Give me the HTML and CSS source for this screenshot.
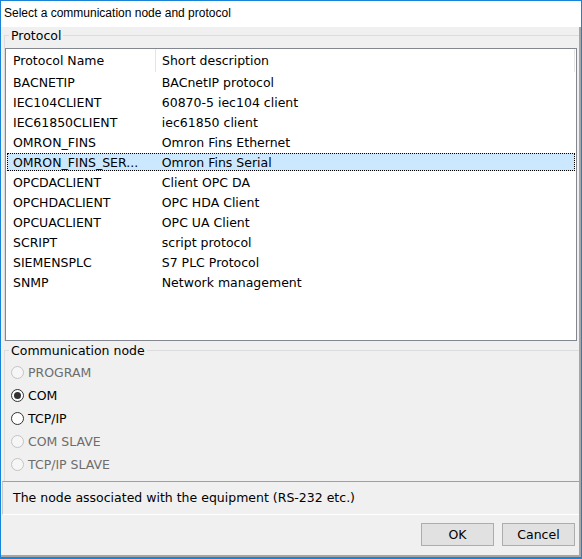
FILE: index.html
```html
<!DOCTYPE html>
<html>
<head>
<meta charset="utf-8">
<link rel="stylesheet" href="styles.css">
</head>
<body>
<div class="window">
  <div class="titlebar">Select a communication node and protocol</div>
  <div class="main">
    <fieldset class="group protocol">
      <legend>Protocol</legend>
      <div class="listview">
        <div class="lv-header">
          <div class="col c1 hcell">Protocol Name</div>
          <div class="col c2 hcell">Short description</div>
        </div>
        <div class="lv-rows">
          <div class="row"><div class="col c1">BACNETIP</div><div class="col c2">BACnetIP protocol</div></div>
          <div class="row"><div class="col c1">IEC104CLIENT</div><div class="col c2">60870-5 iec104 client</div></div>
          <div class="row"><div class="col c1">IEC61850CLIENT</div><div class="col c2">iec61850 client</div></div>
          <div class="row"><div class="col c1">OMRON_FINS</div><div class="col c2">Omron Fins Ethernet</div></div>
          <div class="row selected"><div class="col c1">OMRON_FINS_SER...</div><div class="col c2">Omron Fins Serial</div></div>
          <div class="row"><div class="col c1">OPCDACLIENT</div><div class="col c2">Client OPC DA</div></div>
          <div class="row"><div class="col c1">OPCHDACLIENT</div><div class="col c2">OPC HDA Client</div></div>
          <div class="row"><div class="col c1">OPCUACLIENT</div><div class="col c2">OPC UA Client</div></div>
          <div class="row"><div class="col c1">SCRIPT</div><div class="col c2">script protocol</div></div>
          <div class="row"><div class="col c1">SIEMENSPLC</div><div class="col c2">S7 PLC Protocol</div></div>
          <div class="row"><div class="col c1">SNMP</div><div class="col c2">Network management</div></div>
        </div>
      </div>
    </fieldset>
    <fieldset class="group comm">
      <legend>Communication node</legend>
      <div class="radios">
        <div class="radio disabled"><span class="circle"></span><span class="label">PROGRAM</span></div>
        <div class="radio checked"><span class="circle"></span><span class="label">COM</span></div>
        <div class="radio"><span class="circle"></span><span class="label">TCP/IP</span></div>
        <div class="radio disabled"><span class="circle"></span><span class="label">COM SLAVE</span></div>
        <div class="radio disabled"><span class="circle"></span><span class="label">TCP/IP SLAVE</span></div>
      </div>
    </fieldset>
    <div class="desc">The node associated with the equipment (RS-232 etc.)</div>
    <div class="buttons">
      <div class="btn">OK</div>
      <div class="btn">Cancel</div>
    </div>
  </div>
</div>
</body>
</html>
```
FILE: styles.css
```css
html, body {
  margin: 0;
  padding: 0;
  background: #f0f0f0;
}
.window {
  box-sizing: border-box;
  width: 582px;
  height: 559px;
  border: 1px solid #1883d7;
  border-bottom-width: 2px;
  display: flex;
  flex-direction: column;
  font-family: "DejaVu Sans", sans-serif;
  font-size: 12.5px;
  color: #000;
}
.titlebar {
  height: 26px;
  line-height: 24px;
  background: #fff;
  padding-left: 3px;
  font-family: "Liberation Sans", Arial, sans-serif;
  font-size: 12px;
  flex: none;
}
.main {
  flex: 1;
  background: #f0f0f0;
  border-right: 2px solid #a6a6a6;
  border-bottom: 2px solid #a6a6a6;
  display: flex;
  flex-direction: column;
  min-height: 0;
}
.group {
  margin: 0 0 0 3px;
  padding: 0;
  border: 0;
  border-top: 1px solid #dcdcdc;
  border-left: 1px solid #dcdcdc;
  min-width: 0;
}
.group legend {
  margin-left: 4px;
  padding: 0 2px;
  line-height: 17px;
  height: 16px;
}
.listview {
  margin-top: 5px;
  margin-right: 2px;
  height: 293px;
  box-sizing: border-box;
  border: 1px solid #828790;
  background: #fff;
  display: flex;
  flex-direction: column;
}
.lv-header {
  display: flex;
  height: 23px;
  flex: none;
}
.lv-header .hcell {
  line-height: 23px;
}
.lv-header .c1 {
  border-right: 1px solid #e5e5e5;
}
.lv-header .c2 {
  border-right: 1px solid #e5e5e5;
}
.lv-rows {
  display: flex;
  flex-direction: column;
}
.col {
  box-sizing: border-box;
  white-space: nowrap;
  overflow: hidden;
}
.c1 {
  width: 150px;
  padding-left: 7px;
}
.c2 {
  width: 419px;
  padding-left: 6px;
}
.row {
  display: flex;
  flex: none;
  height: 18px;
  line-height: 18px;
  margin: 1px 1px;
  border: 1px dotted transparent;
  box-sizing: border-box;
}
.row .c1 {
  width: 148px;
  padding-left: 5px;
}
.row.selected {
  background: #cce8ff;
  border-color: #000;
}
.comm {
  margin-top: 1px;
}
.radios {
  padding: 3px 0 5px 0;
}
.radio {
  display: flex;
  align-items: center;
  height: 23px;
}
.circle {
  box-sizing: border-box;
  width: 13px;
  height: 13px;
  border-radius: 50%;
  border: 1px solid #333;
  background: #fff;
  margin-left: 6px;
  margin-right: 4px;
  display: flex;
  align-items: center;
  justify-content: center;
}
.radio.checked .circle::after {
  content: "";
  width: 7px;
  height: 7px;
  border-radius: 50%;
  background: #333;
}
.radio.disabled .circle {
  border-color: #c4c4c4;
  background: #f6f6f6;
}
.radio.disabled .label {
  color: #6d6d6d;
}
.desc {
  margin-left: 1px;
  height: 34px;
  line-height: 32px;
  box-sizing: border-box;
  border-top: 1px solid #a0a0a0;
  border-left: 1px solid #c8c8c8;
  border-bottom: 1px solid #fff;
  padding-left: 10px;
}
.buttons {
  flex: 1;
  display: flex;
  justify-content: flex-end;
  align-items: flex-start;
  padding: 8px 4px 0 0;
  gap: 8px;
}
.btn {
  box-sizing: border-box;
  width: 73px;
  height: 23px;
  line-height: 21px;
  text-align: center;
  background: #e1e1e1;
  border: 1px solid #adadad;
}
```
